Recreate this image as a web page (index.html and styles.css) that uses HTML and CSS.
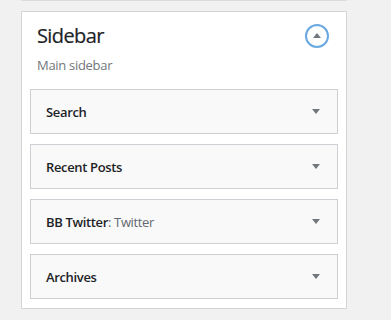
FILE: index.html
```html
<!DOCTYPE html>
<html lang="en">
<head>
    <meta charset="UTF-8">
    <title>Widgets</title>
    <link rel="stylesheet" href="styles.css">
</head>
<body>
    <div class="sidebars">
        <div class="sidebar-prev"></div>

        <div class="sidebar-box">
            <div class="sidebar-name">
                <h2>Sidebar</h2>
                <button class="toggle" type="button" aria-label="Collapse"><span class="arrow-up"></span></button>
            </div>
            <p class="sidebar-desc">Main sidebar</p>

            <div class="widget-list">
                <div class="widget">
                    <h3>Search</h3>
                    <span class="arrow-down"></span>
                </div>
                <div class="widget">
                    <h3>Recent Posts</h3>
                    <span class="arrow-down"></span>
                </div>
                <div class="widget">
                    <h3>BB Twitter<span class="in-title">: Twitter</span></h3>
                    <span class="arrow-down"></span>
                </div>
                <div class="widget">
                    <h3>Archives</h3>
                    <span class="arrow-down"></span>
                </div>
            </div>
        </div>
    </div>
</body>
</html>
```

FILE: styles.css
```css
/* widgets screen, right column */
body {
    margin: 0;
    background-color: #f1f1f1;
    font-family: 'Open Sans', 'Noto Sans', sans-serif;
    color: #1d2327;
}
div.sidebars {
    width: 326px;
    margin-left: 21px;
}
div.sidebar-prev {
    border-bottom: 1px solid #dcdcde;
}
div.sidebar-box {
    margin-top: 10px;
    background-color: #fff;
    border: 1px solid #d4d4d6;
    padding: 12px 0 9px;
}
div.sidebar-name {
    display: flex;
    align-items: center;
    justify-content: space-between;
    padding: 0 17px 0 15px;
}
div.sidebar-name h2 {
    margin: 0;
    font-size: 20px;
    line-height: 24px;
    font-weight: 400;
    color: #1d2327;
    letter-spacing: -0.6px;
    -webkit-text-stroke: 0.2px #1d2327;
}
button.toggle {
    display: flex;
    align-items: center;
    justify-content: center;
    width: 24px;
    height: 24px;
    padding: 0;
    border: 2px solid #6aa8e0;
    border-radius: 50%;
    background: #fff;
}
span.arrow-up {
    width: 0;
    height: 0;
    margin-top: -1px;
    border-left: 4px solid transparent;
    border-right: 4px solid transparent;
    border-bottom: 5px solid #72777c;
}
p.sidebar-desc {
    margin: 8px 0 15px;
    padding: 0 15px;
    font-size: 13px;
    line-height: 18px;
    color: #72777c;
    letter-spacing: -0.3px;
}
div.widget-list {
    display: flex;
    flex-direction: column;
    gap: 10px;
    padding: 0 8px 0 8px;
}
div.widget {
    display: flex;
    align-items: center;
    justify-content: space-between;
    height: 43px;
    padding: 0 17px 0 15px;
    background-color: #f9f9f9;
    border: 1px solid #ccd0d4;
}
div.widget h3 {
    margin: 2px 0 0;
    font-size: 13px;
    line-height: 41px;
    font-weight: 600;
    color: #1d2327;
    letter-spacing: -0.35px;
}
span.in-title {
    font-weight: 400;
    color: #646970;
}
span.arrow-down {
    width: 0;
    height: 0;
    border-left: 4px solid transparent;
    border-right: 4px solid transparent;
    border-top: 5px solid #72777c;
}
```
